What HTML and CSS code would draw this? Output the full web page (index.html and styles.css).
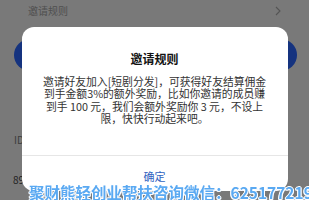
FILE: index.html
```html
<!DOCTYPE html>
<html lang="zh-CN">
<head>
<meta charset="utf-8">
<title>邀请规则</title>
<link rel="stylesheet" href="styles.css">
</head>
<body>
<div class="page">
  <div class="topbar">
    <span class="topbar-title">邀请规则</span>
    <svg class="chevron" width="6" height="10" viewBox="0 0 6 10"><path d="M1 1 L5 5 L1 9" fill="none" stroke="#a8a8a8" stroke-width="1.1"/></svg>
  </div>
  <div class="banner"></div>
  <div class="id-row">ID</div>
  <div class="num-row">89</div>
</div>

<div class="overlay">
  <div class="modal">
    <div class="modal-title">邀请规则</div>
    <p class="modal-body">邀请好友加入[短剧分发]，可获得好友结算佣金<br>到手金额3%的额外奖励，比如你邀请的成员赚<br>到手 100 元，我们会额外奖励你 3 元，不设上<br>限，快快行动起来吧。</p>
    <div class="modal-footer">确定</div>
  </div>
</div>

<div class="watermark">聚财熊轻创业帮扶咨询微信：625177219</div>
</body>
</html>
```

FILE: styles.css
```css
html, body {
  margin: 0;
  padding: 0;
}
body {
  width: 309px;
  height: 200px;
  overflow: hidden;
  font-family: "Noto Sans CJK SC", "Noto Sans", sans-serif;
  background: #f2f2f2;
}
.page {
  height: 200px;
  background: #f2f2f2;
  display: flex;
  flex-direction: column;
}
.topbar {
  height: 21px;
  display: flex;
  align-items: center;
  justify-content: space-between;
  padding: 0 28px 0 28px;
  font-size: 10px;
  color: #a0a0a0;
}
.topbar-title {
  line-height: 12px;
}
.chevron {
  display: block;
}
.banner {
  margin: 18px 12px 0 14px;
  height: 32px;
  border-radius: 16px;
  background: #2a66ff;
}
.id-row {
  margin: 63px 0 0 14px;
  font-size: 10px;
  line-height: 12px;
  color: #7a7a7a;
}
.num-row {
  margin: 28px 0 0 13px;
  font-size: 10px;
  line-height: 12px;
  color: #444;
}
.overlay {
  position: fixed;
  inset: 0;
  background: rgba(0, 0, 0, 0.5);
  display: flex;
  justify-content: center;
  align-items: flex-start;
  padding-top: 27px;
}
.modal {
  width: 266px;
  height: 164px;
  background: #fff;
  border-radius: 12px;
  display: flex;
  flex-direction: column;
  box-sizing: border-box;
  padding-top: 25px;
}
.modal-title {
  font-size: 12px;
  line-height: 14px;
  font-weight: 700;
  color: #111;
  text-align: center;
}
.modal-body {
  margin: 9px 0 0;
  padding: 0 10px;
  font-size: 10.8px;
  line-height: 12.4px;
  color: #333;
  text-align: center;
  white-space: nowrap;
}
.modal-footer {
  margin-top: auto;
  border-top: 1px solid #e6e6e6;
  height: 36px;
  box-sizing: border-box;
  padding-top: 12.5px;
  font-size: 11px;
  line-height: 14px;
  color: #3163bf;
  text-align: center;
}
.watermark {
  position: fixed;
  left: 29px;
  top: 183px;
  font-size: 15.5px;
  line-height: 18px;
  font-weight: 700;
  color: #5aa9f2;
  white-space: nowrap;
  text-shadow: 1px 0 0 #fff, -1px 0 0 #fff, 0 1px 0 #fff, 0 -1px 0 #fff, 1px 1px 0 #e8f3ff, -1px 1px 0 #e8f3ff;
}
```
